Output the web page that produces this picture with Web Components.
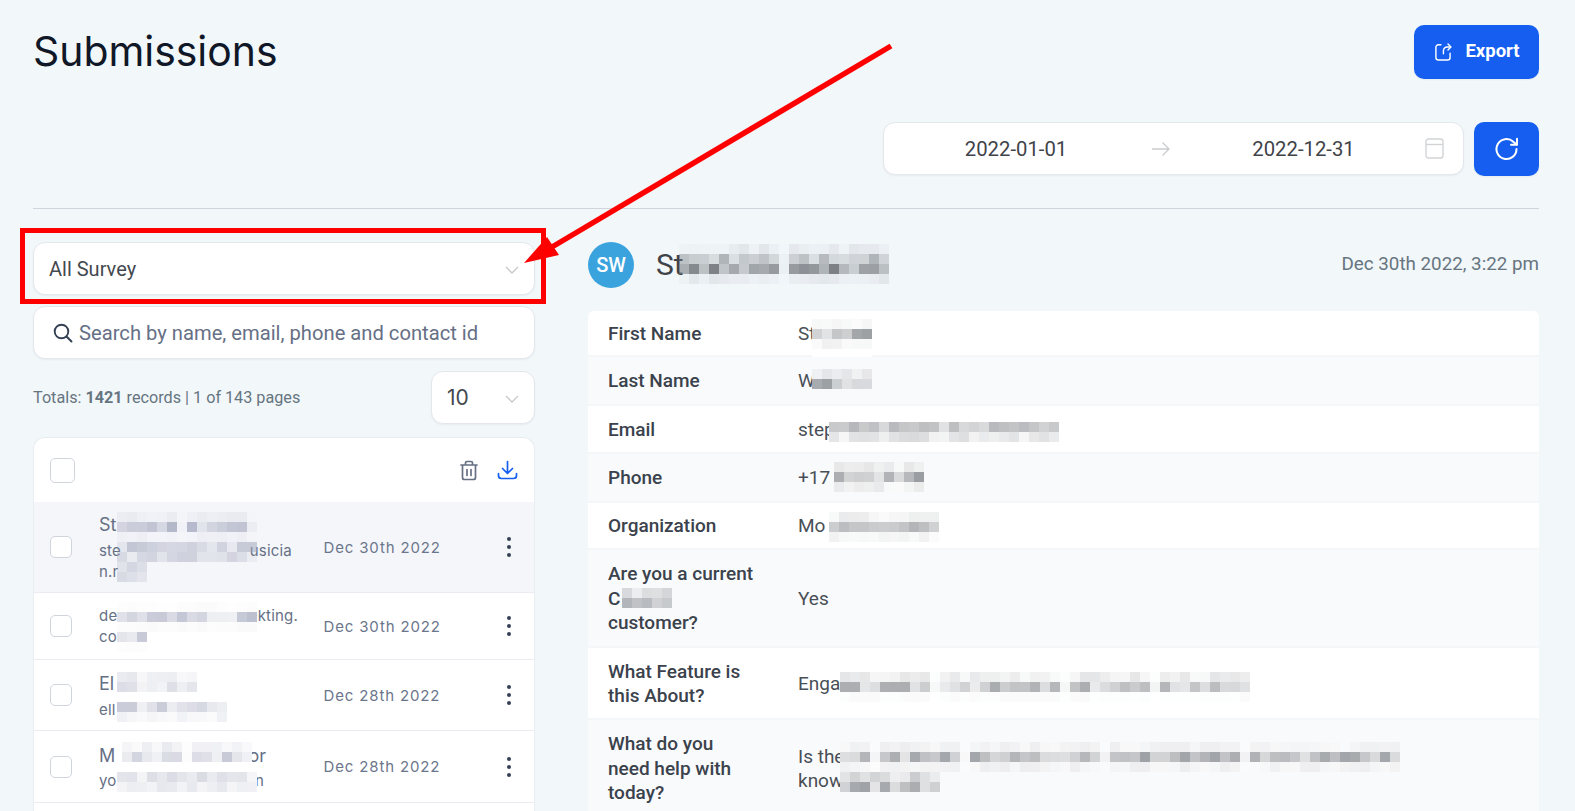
<!DOCTYPE html>
<html lang="en">
<head>
<meta charset="utf-8">
<title>Submissions</title>
<style>
  html, body { margin: 0; height: 811px; overflow: hidden; background: #f2f7fa; }
</style>
</head>
<body>
<submissions-page></submissions-page>

<script>
const ICONS = {
    chevron: '<svg width="14" height="8" viewBox="0 0 14 8" fill="none" stroke="#c6c8cc" stroke-width="1.3"><path d="M1 1l6 6 6-6"/></svg>',
    exportIcon: '<svg width="20" height="20" viewBox="0 0 24 24" fill="none" stroke="#fff" stroke-width="1.7" stroke-linecap="round" stroke-linejoin="round"><path d="M9.5 3.2H6.5A3 3 0 0 0 3.5 6.2v12.3a3 3 0 0 0 3 3h11a3 3 0 0 0 3-3v-5"/><path d="M12.5 14v-3.500A4.500 4.500 0 0 1 17 6h4"/><path d="M18 2.500L21.500 6 18 9.500"/></svg>',
    refresh: '<svg width="26" height="26" viewBox="0 0 26 26" fill="none" stroke="#fff" stroke-width="2" stroke-linecap="round" stroke-linejoin="round"><path d="M22.500 13a10 10 0 1 1-3.200-7.300L22.500 8.500"/><path d="M23 2.800v6h-6"/></svg>',
    arrow: '<svg width="20" height="16" viewBox="0 0 20 16" fill="none" stroke="#c9cbce" stroke-width="1.3"><path d="M1 8h17M11.500 1.500L18 8l-6.500 6.500"/></svg>',
    calendar: '<svg width="19" height="21" viewBox="0 0 19 21" fill="none" stroke="#d2d3d6" stroke-width="1.400"><rect x="1" y="1" width="17" height="19" rx="2.500"/><path d="M1 6.500h17"/></svg>',
    search: '<svg width="20" height="20" viewBox="0 0 20 20" fill="none" stroke="#344054" stroke-width="1.900" stroke-linecap="round"><circle cx="8.500" cy="8.500" r="6.800"/><path d="M13.500 13.500L18.500 18.500"/></svg>',
    trash: '<svg width="20" height="21" viewBox="0 0 20 21" fill="none" stroke="#667085" stroke-width="1.700" stroke-linecap="round" stroke-linejoin="round"><path d="M2 5h16M6.500 5V3a1.500 1.500 0 0 1 1.500-1.500h4A1.500 1.500 0 0 1 13.500 3v2M3.500 5v12.500a2 2 0 0 0 2 2h9a2 2 0 0 0 2-2V5M8 9.500v6M12 9.500v6"/></svg>',
    download: '<svg width="21" height="20" viewBox="0 0 21 20" fill="none" stroke="#155eef" stroke-width="1.700" stroke-linecap="round" stroke-linejoin="round"><path d="M10.500 1.500v11.500M5.500 8.500l5 5 5-5M1.500 13.500v2a3 3 0 0 0 3 3h12a3 3 0 0 0 3-3v-2"/></svg>',
    dots: '<svg width="6" height="22" viewBox="0 0 6 22" fill="#344054"><circle cx="3" cy="3" r="2"/><circle cx="3" cy="11" r="2"/><circle cx="3" cy="19" r="2"/></svg>'
};

// shadow root helper, every element below goes through it
function shadow(el, html) {
    if (!el.shadowRoot) el.attachShadow({ mode: 'open' });
    el.shadowRoot.innerHTML = html;
}

class BlueButton extends HTMLElement {
    connectedCallback() {
        shadow(this, `
<style>
  :host { display: inline-flex; align-items: center; justify-content: center; gap: 12px; box-sizing: border-box; width: 125px; height: 54px; background: #155eef; border-radius: 10px; color: #fff; font: 700 18.500px Roboto, sans-serif; box-shadow: 0 1px 2px rgba(16,24,40,.05); }
  svg { display: block; }
  span { position: relative; top: -1.500px; }
</style>
${ICONS[this.getAttribute('icon')]}<span><slot></slot></span>`);
    }
}
customElements.define('blue-button', BlueButton);

class DateRange extends HTMLElement {
    connectedCallback() {
        shadow(this, `
<style>
  :host { display: grid; grid-template-columns: 200px 90px 195px 1fr; align-items: center; box-sizing: border-box; width: 581px; height: 53px; padding-left: 32px; background: #fff; border: 1px solid #e4e7ec; border-radius: 12px; box-shadow: 0 1px 2px rgba(16,24,40,.05); color: #3f4349; font: 400 20.300px Roboto, sans-serif; }
  span { text-align: center; }
  .mid { display: flex; justify-content: center; }
  .cal { display: flex; justify-content: flex-end; padding-right: 19px; }
  svg { display: block; }
</style>
<span>${this.getAttribute('from')}</span>
<div class="mid">${ICONS.arrow}</div>
<span>${this.getAttribute('to')}</span>
<div class="cal">${ICONS.calendar}</div>`);
    }
}
customElements.define('date-range', DateRange);

class SelectBox extends HTMLElement {
    connectedCallback() {
        shadow(this, `
<style>
  :host { display: flex; align-items: center; justify-content: space-between; box-sizing: border-box; height: 53px; padding: 0 15px; background: #fff; border: 1px solid #e4e7ec; border-radius: 12px; box-shadow: 0 1px 2px rgba(16,24,40,.05); color: #44494f; font: 400 20px Roboto, sans-serif; }
  svg { display: block; margin-top: 2px; }
</style>
<slot></slot>${ICONS.chevron}`);
    }
}
customElements.define('select-box', SelectBox);

class SearchBox extends HTMLElement {
    connectedCallback() {
        shadow(this, `
<style>
  :host { display: flex; align-items: center; gap: 6px; box-sizing: border-box; height: 53px; padding: 0 0 0 19px; background: #fff; border: 1px solid #e4e7ec; border-radius: 12px; box-shadow: 0 1px 2px rgba(16,24,40,.05); color: #667085; font: 400 20.200px Roboto, sans-serif; }
  svg { display: block; }
</style>
${ICONS.search}<span>${this.getAttribute('placeholder')}</span>`);
    }
}
customElements.define('search-box', SearchBox);

class CheckBox extends HTMLElement {
    connectedCallback() {
        const w = this.getAttribute('size') || 22;
        shadow(this, `
<style>
  :host { display: block; box-sizing: border-box; width: ${w}px; height: ${w}px; background: #fff; border: 1px solid #d0d5dd; border-radius: 5px; }
</style>`);
    }
}
customElements.define('check-box', CheckBox);

// pixelated censor block, one cell is 10px like in the screenshot
class PixelMask extends HTMLElement {
    connectedCallback() {
        const cols = +this.getAttribute('cols');
        const levels = this.getAttribute('levels').split(',').map(Number);
        const gaps = (this.getAttribute('gaps') || '').split(',').filter(Boolean).map(Number);
        const tint = this.getAttribute('tint') || '#83878c';
        const wash = this.getAttribute('wash');
        const washHeight = +(this.getAttribute('wash-h') || levels.length * 10);
        let seed = +(this.getAttribute('seed') || 7);
        const next = () => {
            seed = (seed * 9301 + 49297) % 233280;
            return seed / 233280;
        };
        let cells = '';
        levels.forEach((level, row) => {
            for (let col = 0; col < cols; col++) {
                let a = level * (0.3 + next() * 1.05);
                if (gaps.includes(col)) a *= 0.15;
                cells += `<rect x="${col * 10}" y="${row * 10}" width="10" height="10" fill="${tint}" fill-opacity="${Math.min(a, 1).toFixed(2)}"/>`;
            }
        });
        const height = Math.max(levels.length * 10, washHeight);
        shadow(this, `
<style>
  :host { position: absolute; left: ${this.getAttribute('x')}px; top: ${this.getAttribute('y')}px; display: block; line-height: 0; ${wash ? `background: ${wash};` : ''} }
  svg { display: block; }
</style>
<svg width="${cols * 10}" height="${height}" shape-rendering="crispEdges">${cells}</svg>`);
    }
}
customElements.define('pixel-mask', PixelMask);

class RowLine extends HTMLElement {
    connectedCallback() {
        shadow(this, `
<style>
  :host { display: flex; justify-content: space-between; width: ${this.getAttribute('w') || 193}px; white-space: nowrap; }
</style>
<span>${this.getAttribute('left') || ''}</span><span>${this.getAttribute('right') || ''}</span>`);
    }
}
customElements.define('row-line', RowLine);

class SubmissionRow extends HTMLElement {
    connectedCallback() {
        const active = this.hasAttribute('active');
        shadow(this, `
<style>
  :host { position: relative; display: grid; grid-template-columns: 22px 251.500px 117px 1fr; align-items: center; box-sizing: border-box; height: ${this.getAttribute('h')}px; padding: 0 22px 0 16px; border-bottom: 1px solid #e9ecf0; background: ${active ? '#f5f6fa' : '#fff'}; font-family: Inter, sans-serif; color: #667085; }
  .who { padding-left: 27px; display: block; }
  .name { display: block; font-size: 18px; line-height: 28.500px; }
  .mail { display: block; font-size: 15px; line-height: 21.500px; letter-spacing: .2px; }
  .date { font-size: 15px; letter-spacing: .85px; white-space: nowrap; color: #6b768c; }
  .menu { display: flex; justify-content: flex-end; }
  svg { display: block; }
</style>
<check-box></check-box>
<div class="who">
  <div class="name"><slot name="name"></slot></div>
  <div class="mail"><slot name="mail"></slot></div>
</div>
<div class="date">${this.getAttribute('date')}</div>
<div class="menu">${ICONS.dots}</div>
<slot name="mask"></slot>`);
    }
}
customElements.define('submission-row', SubmissionRow);

class SubmissionList extends HTMLElement {
    connectedCallback() {
        shadow(this, `
<style>
  :host { display: block; box-sizing: border-box; background: #fff; border: 1px solid #e9ecf0; border-bottom: 0; border-radius: 12px 12px 0 0; overflow: hidden; }
  .head { display: flex; align-items: center; justify-content: space-between; box-sizing: border-box; height: 64px; padding: 0 16px; }
  .tools { display: flex; align-items: center; gap: 18.500px; }
  svg { display: block; }
</style>
<div class="head">
  <check-box size="25"></check-box>
  <div class="tools">${ICONS.trash}${ICONS.download}</div>
</div>
<slot></slot>`);
    }
}
customElements.define('submission-list', SubmissionList);

class DetailRow extends HTMLElement {
    connectedCallback() {
        shadow(this, `
<style>
  :host { position: relative; display: grid; grid-template-columns: 210px 1fr; align-items: center; box-sizing: border-box; height: ${this.getAttribute('h')}px; box-shadow: inset 0 -2px 0 #f4f7fa; font: 400 19px/24.500px Roboto, sans-serif; }
  :host(:nth-child(odd)) { background: #f9fafc; }
  :host(:nth-child(even)) { background: #fff; }
  .label { width: 146px; padding-left: 20px; font-weight: 500; color: #3b424c; }
  .value { color: #494f57; }
</style>
<div class="label"><slot name="label"></slot></div>
<div class="value"><slot></slot></div>
<slot name="mask"></slot>`);
    }
}
customElements.define('detail-row', DetailRow);

class DetailPanel extends HTMLElement {
    connectedCallback() {
        shadow(this, `
<style>
  :host { position: relative; display: block; }
  .head { display: flex; align-items: center; height: 46px; margin-bottom: 23px; }
  .avatar { display: flex; align-items: center; justify-content: center; width: 46px; height: 46px; border-radius: 50%; background: #3aa3de; color: #fff; font: 500 20px Roboto, sans-serif; }
  .name { margin: -2px 0 0 22px; color: #3f4349; font: 400 30px Roboto, sans-serif; flex: 1; }
  .when { margin-top: -3px; color: #667580; font: 400 18.800px Roboto, sans-serif; }
  .table { border-radius: 6px 6px 0 0; overflow: hidden; }
</style>
<div class="head">
  <div class="avatar">${this.getAttribute('initials')}</div>
  <div class="name">${this.getAttribute('name')}</div>
  <div class="when">${this.getAttribute('when')}</div>
</div>
<slot name="mask"></slot>
<div class="table"><slot></slot></div>`);
    }
}
customElements.define('detail-panel', DetailPanel);

// the red annotation drawn on top of the screenshot
class RedMarkup extends HTMLElement {
    connectedCallback() {
        shadow(this, `
<style>
  :host { position: absolute; left: 0; top: 0; display: block; pointer-events: none; }
  svg { display: block; }
</style>
<svg width="1575" height="811" fill="none">
  <rect x="22.500" y="230.500" width="521" height="71" stroke="#ff0000" stroke-width="5"/>
  <path d="M891 46L552 247" stroke="#ff0000" stroke-width="5.500"/>
  <path d="M524 263L547 237L559 255Z" fill="#ff0000"/>
</svg>`);
    }
}
customElements.define('red-markup', RedMarkup);

class SubmissionsPage extends HTMLElement {
    connectedCallback() {
        const gray = '#7d8186';
        const blue = '#9a9fb6';
        shadow(this, `
<style>
  :host { position: relative; display: block; box-sizing: border-box; width: 1575px; height: 811px; padding: 25px 36px 0 33px; overflow: hidden; font-family: Roboto, sans-serif; }
  .top { display: flex; align-items: center; justify-content: space-between; height: 54px; }
  h1 { margin: 0; color: #101828; font: 400 40.900px Inter, sans-serif; position: relative; top: -1px; }
  .range { display: flex; justify-content: flex-end; gap: 10px; margin-top: 43px; }
  .range blue-button { width: 65px; gap: 0; }
  hr { margin: 32px 0 33px; border: 0; border-top: 1px solid #d0d5dd; }
  .cols { display: grid; grid-template-columns: 502px 951px; column-gap: 53px; }
  .left { display: flex; flex-direction: column; }
  .left search-box { margin-top: 11px; }
  .totals { display: flex; align-items: center; justify-content: space-between; margin: 12px 0 13px; color: #667580; font-size: 16.200px; }
  .totals b { font-weight: 700; }
  .totals select-box { width: 104px; font: 400 21px Inter, sans-serif; padding-left: 15px; }
</style>
<div class="top">
  <h1>Submissions</h1>
  <blue-button icon="exportIcon">Export</blue-button>
</div>
<div class="range">
  <date-range from="2022-01-01" to="2022-12-31"></date-range>
  <blue-button icon="refresh"></blue-button>
</div>
<hr>
<div class="cols">
  <div class="left">
    <select-box>All Survey</select-box>
    <search-box placeholder="Search by name, email, phone and contact id"></search-box>
    <div class="totals">
      <span>Totals: <b>1421</b> records | 1 of 143 pages</span>
      <select-box>10</select-box>
    </div>
    <submission-list>
      <submission-row active h="91" date="Dec 30th 2022">
        <span slot="name">St</span>
        <row-line slot="mail" left="ste" right="usicia"></row-line>
        <row-line slot="mail" left="n.r"></row-line>
        <pixel-mask slot="mask" x="83" y="10" cols="14" levels=".1,.62,.06" gaps="6,13" tint="${blue}" seed="11"></pixel-mask>
        <pixel-mask slot="mask" x="83" y="40" cols="14" levels=".42,.32" tint="${blue}" seed="23"></pixel-mask>
        <pixel-mask slot="mask" x="83" y="60" cols="3" levels=".3,.28" tint="${blue}" seed="5"></pixel-mask>
      </submission-row>
      <submission-row h="67" date="Dec 30th 2022">
        <row-line slot="mail" left="de" right="kting." w="199"></row-line>
        <row-line slot="mail" left="co"></row-line>
        <pixel-mask slot="mask" x="83" y="9" cols="14" levels=".03,.5,.04" tint="${blue}" wash="#fff" seed="31"></pixel-mask>
        <pixel-mask slot="mask" x="83" y="39" cols="3" levels=".42,.03" tint="${blue}" wash="#fff" seed="3"></pixel-mask>
      </submission-row>
      <submission-row h="71" date="Dec 28th 2022">
        <span slot="name">El</span>
        <row-line slot="mail" left="ell"></row-line>
        <pixel-mask slot="mask" x="83" y="12" cols="8" levels=".18,.28" tint="${blue}" wash="#fff" seed="41"></pixel-mask>
        <pixel-mask slot="mask" x="83" y="42" cols="11" levels=".42,.12" tint="${blue}" wash="#fff" seed="17"></pixel-mask>
      </submission-row>
      <submission-row h="72" date="Dec 28th 2022">
        <row-line slot="name" left="M" right="or" w="167"></row-line>
        <row-line slot="mail" left="yo" right="n" w="165"></row-line>
        <pixel-mask slot="mask" x="88" y="11" cols="13" levels=".16,.42" gaps="6" tint="${blue}" wash="#fff" seed="53"></pixel-mask>
        <pixel-mask slot="mask" x="83" y="41" cols="14" levels=".28,.18" tint="${blue}" wash="#fff" seed="61"></pixel-mask>
      </submission-row>
      <submission-row h="72" date=""></submission-row>
    </submission-list>
  </div>
  <detail-panel initials="SW" name="St" when="Dec 30th 2022, 3:22 pm">
    <pixel-mask slot="mask" x="91" y="2" cols="21" levels=".1,.42,.78,.1" gaps="10" tint="${gray}" seed="71"></pixel-mask>
    <detail-row h="46"><span slot="label">First Name</span>St
      <pixel-mask slot="mask" x="224" y="8" cols="6" levels=".06,.62,.1" tint="${gray}" wash="#fff" seed="13" wash-h="40"></pixel-mask></detail-row>
    <detail-row h="49"><span slot="label">Last Name</span>W
      <pixel-mask slot="mask" x="224" y="12" cols="6" levels=".12,.62" tint="${gray}" wash="#f9fafc" seed="29"></pixel-mask></detail-row>
    <detail-row h="48"><span slot="label">Email</span>step
      <pixel-mask slot="mask" x="241" y="16" cols="23" levels=".42,.22" tint="${gray}" wash="#fff" seed="37"></pixel-mask></detail-row>
    <detail-row h="49"><span slot="label">Phone</span>+17
      <pixel-mask slot="mask" x="246" y="8" cols="9" levels=".14,.58,.14" tint="${gray}" wash="#fff" seed="43"></pixel-mask></detail-row>
    <detail-row h="47"><span slot="label">Organization</span>Mo
      <pixel-mask slot="mask" x="241" y="9" cols="11" levels=".12,.55,.08" tint="${gray}" wash="#fff" seed="47"></pixel-mask></detail-row>
    <detail-row h="98"><span slot="label">Are you a current<br>C<br>customer?</span>Yes
      <pixel-mask slot="mask" x="34" y="38" cols="5" levels=".3,.5" tint="${gray}" wash="#f9fafc" seed="59"></pixel-mask></detail-row>
    <detail-row h="72"><span slot="label">What Feature is this About?</span>Enga
      <pixel-mask slot="mask" x="252" y="24" cols="41" levels=".16,.5,.03" gaps="9,22,31" tint="${gray}" wash="#fff" seed="67"></pixel-mask></detail-row>
    <detail-row h="98"><span slot="label">What do you need help with today?</span>Is the<br>know
      <pixel-mask slot="mask" x="252" y="22" cols="56" levels=".08,.55,.08" gaps="3,12,26,40" tint="${gray}" wash="#fcfcfd" seed="73"></pixel-mask>
      <pixel-mask slot="mask" x="252" y="52" cols="10" levels=".3,.55" tint="${gray}" wash="#fcfcfd" seed="79"></pixel-mask></detail-row>
  </detail-panel>
</div>
<red-markup></red-markup>`);
    }
}
customElements.define('submissions-page', SubmissionsPage);
</script>
</body>
</html>
